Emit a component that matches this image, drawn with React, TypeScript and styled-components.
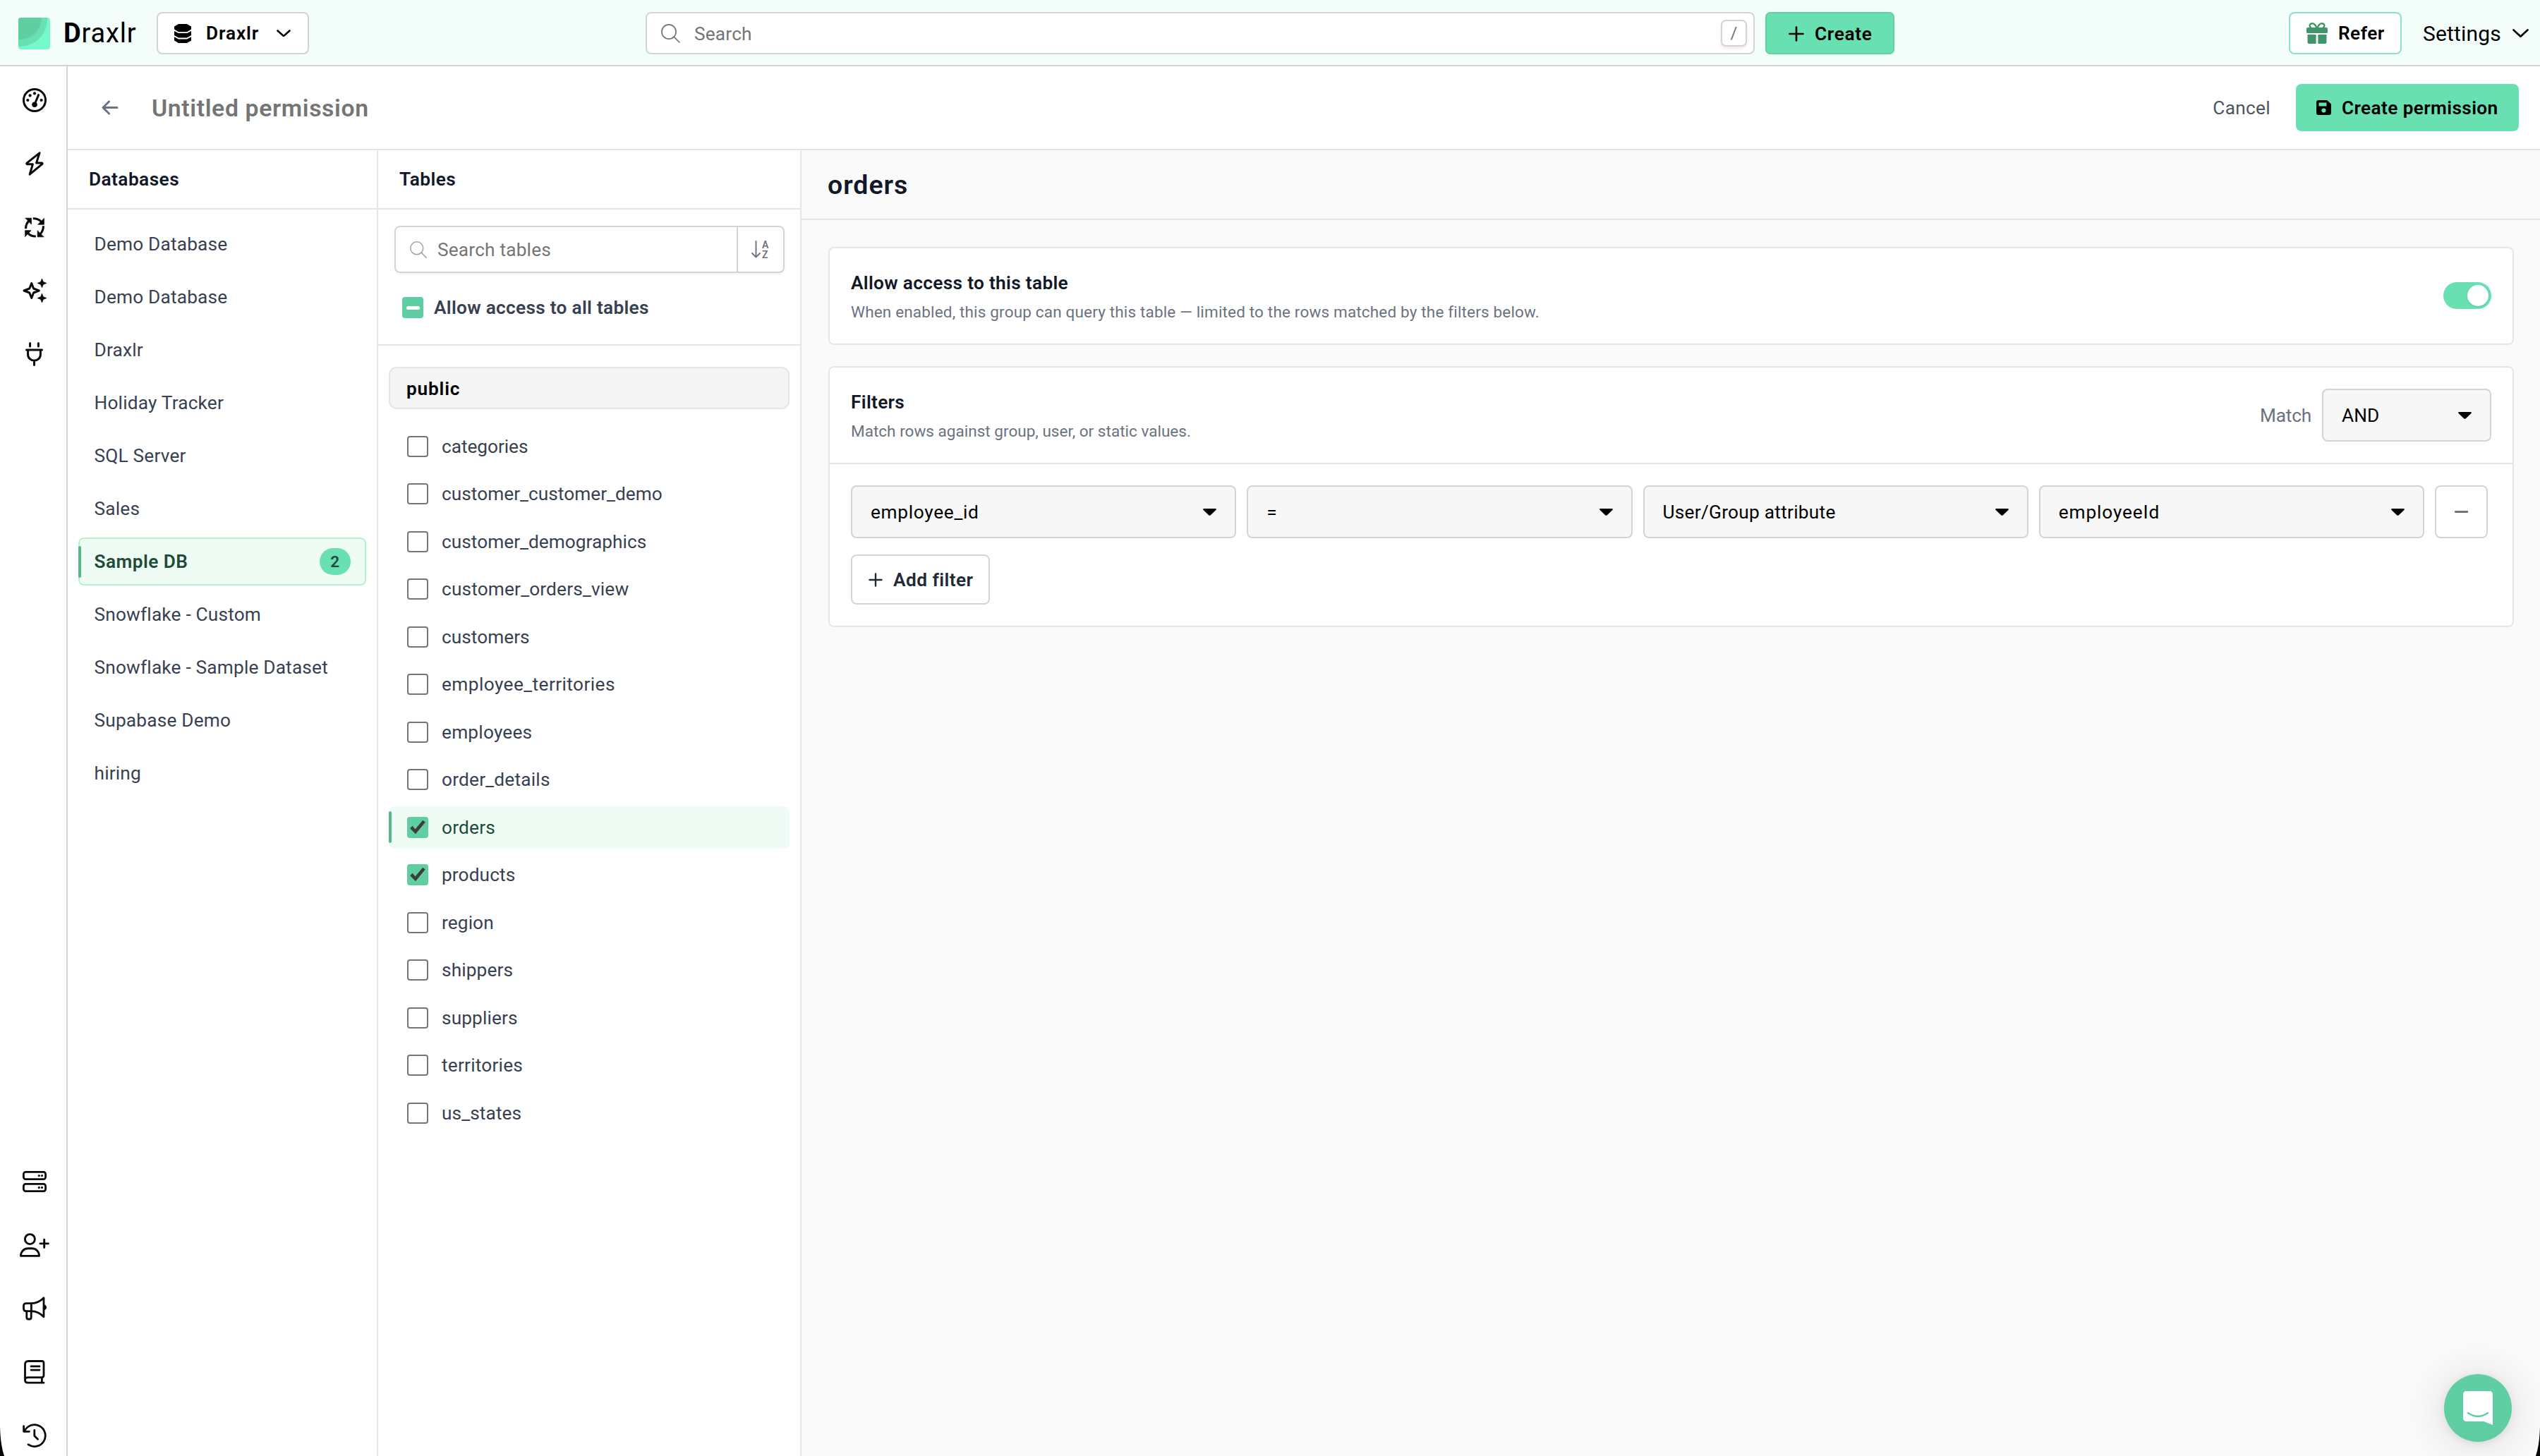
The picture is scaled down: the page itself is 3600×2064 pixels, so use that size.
import React from 'react';
import styled, { createGlobalStyle, css } from 'styled-components';

const c = {
  mint: '#69e0b2',
  mintDeep: '#5fcea3',
  ink: '#111827',
  text: '#374151',
  muted: '#6b7280',
  placeholder: '#757575',
  line: '#e5e5eb',
  frame: '#d4d4d4',
  input: '#d1d5db',
};

const GlobalStyle = createGlobalStyle`
  *, *::before, *::after { box-sizing: border-box; }
  body {
    margin: 0;
    background: #fff;
    font-family: Roboto, "Liberation Sans", sans-serif;
    font-size: 26.25px;
    letter-spacing: 0.007em;
    color: #000;
  }
  svg { display: block; flex: none; }
`;

const Page = styled.div`
  position: relative;
  display: flex;
  flex-direction: column;
  width: 3600px;
  height: 2064px;
  overflow: hidden;
  white-space: nowrap;
`;

/* ---------- top bar ---------- */

const TopBar = styled.header`
  display: flex;
  align-items: center;
  flex: none;
  height: 94px;
  padding: 2px 16px 0 26px;
  background: #f3fdfa;
  border-bottom: 2px solid ${c.frame};
`;

const Brand = styled.div`
  display: flex;
  align-items: center;
  gap: 19px;
  width: 196px;
`;

const Wordmark = styled.span`
  font-size: 38px;
  font-weight: 400;
  letter-spacing: 0.022em;
  b { font-weight: 700; }
`;

const outlined = css`
  display: flex;
  align-items: center;
  background: #fff;
  border: 2px solid ${c.frame};
  border-radius: 8px;
`;

const strong = css`
  font-weight: 600;
  letter-spacing: 0.017em;
`;

const Workspace = styled.div`
  ${outlined}
  ${strong}
  width: 216px;
  height: 60px;
  padding-left: 23px;
  letter-spacing: 0.034em;
  span { width: 121px; padding-left: 21px; }
`;

const GlobalSearch = styled.div`
  ${outlined}
  width: 1572px;
  height: 60px;
  margin-left: 477px;
  padding: 0 9px 0 20px;
  color: ${c.placeholder};
  span { flex: 1; padding: 2px 0 0 20px; }
`;

const Key = styled.kbd`
  display: flex;
  align-items: center;
  justify-content: center;
  width: 37px;
  height: 38px;
  font: 400 24px Roboto, sans-serif;
  border: 2px solid ${c.frame};
  border-radius: 7px;
  box-shadow: 0 3px 4px rgba(0, 0, 0, 0.08);
`;

const CreateButton = styled.button`
  display: flex;
  align-items: center;
  height: 60px;
  width: 183px;
  margin-left: 15px;
  padding: 1px 0 0 31px;
  gap: 15px;
  font: inherit;
  ${strong}
  letter-spacing: 0.025em;
  background: ${c.mint};
  border: 2px solid #63d0a3;
  border-radius: 7px;
`;

const ReferButton = styled.button`
  ${outlined}
  height: 60px;
  width: 160px;
  margin-left: auto;
  padding: 0 0 0 23px;
  gap: 15px;
  font: inherit;
  ${strong}
  border-color: #8ae5bd;
`;

const SettingsMenu = styled.div`
  display: flex;
  align-items: center;
  justify-content: space-between;
  width: 150px;
  margin-left: 30px;
  font-size: 30px;
`;

/* ---------- frame ---------- */

const Body = styled.div`
  display: flex;
  flex: 1;
  min-height: 0;
`;

const Rail = styled.nav`
  display: flex;
  flex-direction: column;
  justify-content: space-between;
  flex: none;
  width: 96px;
  padding-top: 3px;
  border-right: 2px solid ${c.frame};
`;

const RailGroup = styled.div<{ $bleed?: boolean }>`
  margin-bottom: ${p => (p.$bleed ? '-16px' : '0')};
`;

const RailItem = styled.div`
  display: flex;
  align-items: center;
  justify-content: center;
  height: 90px;
  padding-left: 3px;
  color: #0a0a0a;
`;

const Workarea = styled.div`
  display: flex;
  flex-direction: column;
  flex: 1;
  min-width: 0;
`;

const Toolbar = styled.div`
  display: flex;
  align-items: center;
  flex: none;
  height: 119px;
  padding: 0 30px 0 48px;
  border-bottom: 2px solid ${c.line};
`;

const Title = styled.h1`
  flex: 1;
  margin: 0 0 0 47px;
  padding-top: 2px;
  font-size: 33.75px;
  font-weight: 600;
  letter-spacing: 0.019em;
  color: ${c.placeholder};
`;

const Cancel = styled.span`
  margin-right: 36px;
  letter-spacing: 0.011em;
  color: #4b5563;
`;

const SaveButton = styled.button`
  display: flex;
  align-items: center;
  gap: 15px;
  width: 316px;
  height: 67px;
  padding: 0 0 0 29px;
  font: inherit;
  ${strong}
  letter-spacing: 0.014em;
  background: ${c.mint};
  border: 0;
  border-radius: 8px;
`;

const Columns = styled.div`
  display: flex;
  flex: 1;
  min-height: 0;
`;

const Column = styled.section<{ $width: number }>`
  flex: none;
  width: ${p => p.$width}px;
  border-right: 2px solid ${c.line};
`;

const ColumnHead = styled.h2<{ $inset: number }>`
  display: flex;
  align-items: center;
  height: 84px;
  margin: 0;
  padding-left: ${p => p.$inset}px;
  font-size: inherit;
  ${strong}
  color: ${c.ink};
  border-bottom: 2px solid ${c.line};
`;

/* ---------- databases ---------- */

const DatabaseList = styled.div`
  display: flex;
  flex-direction: column;
  gap: 7px;
  padding: 15px 15px 0;
`;

const Marker = styled.i<{ $height: number }>`
  position: absolute;
  left: -2px;
  top: 50%;
  width: 4px;
  height: ${p => p.$height}px;
  margin-top: ${p => -p.$height / 2}px;
  background: #55b98a;
  border-radius: 2px;
`;

const DatabaseItem = styled.div<{ $active: boolean }>`
  position: relative;
  display: flex;
  align-items: center;
  justify-content: space-between;
  height: 68px;
  padding: 0 20px 0 20.5px;
  color: ${c.text};
  border: 2px solid transparent;
  border-radius: 8px;
  ${p => p.$active && css`
    ${strong}
    color: #1f4b39;
    background: #effcf6;
    border-color: #b6f2d0;
  `}
`;

const Badge = styled.span`
  display: flex;
  align-items: center;
  justify-content: center;
  width: 44px;
  height: 38px;
  font-size: 22.5px;
  color: #1f4b39;
  background: ${c.mint};
  border-radius: 19px;
`;

/* ---------- tables ---------- */

const TableTools = styled.div`
  height: 193px;
  padding: 23px 22px 0 23px;
  border-bottom: 2px solid ${c.line};
`;

const TableSearch = styled.div`
  ${outlined}
  height: 67px;
  padding-left: 20px;
  color: ${c.placeholder};
  border-color: ${c.input};
  box-shadow: 0 2px 3px rgba(0, 0, 0, 0.05);
  > span { flex: 1; padding: 1px 0 0 15px; }
`;

const SortToggle = styled.div`
  display: flex;
  align-items: center;
  gap: 2px;
  width: 66px;
  height: 100%;
  padding-left: 19px;
  color: ${c.muted};
  border-left: 2px solid ${c.input};
`;

const SortLetters = styled.div`
  display: flex;
  flex-direction: column;
  font-size: 14px;
  font-weight: 600;
  line-height: 14px;
`;

const AllTables = styled.div`
  display: flex;
  align-items: center;
  gap: 15px;
  height: 30px;
  margin: 34px 0 0 11px;
  ${strong}
  letter-spacing: 0.011em;
  color: ${c.text};
`;

const Box = styled.span<{ $on?: boolean }>`
  display: flex;
  align-items: center;
  justify-content: center;
  flex: none;
  width: 30px;
  height: 30px;
  border: ${p => (p.$on ? '0' : '2px solid #767676')};
  border-radius: 4px;
  background: ${p => (p.$on ? c.mintDeep : '#fff')};
`;

const Dash = styled.i`
  width: 19px;
  height: 5px;
  background: #fff;
  border-radius: 2.5px;
`;

const TableList = styled.div`
  display: flex;
  flex-direction: column;
  gap: 7.5px;
  padding: 30px 15px 0;
`;

const Schema = styled.div`
  display: flex;
  align-items: center;
  height: 60px;
  margin-bottom: 15px;
  padding: 1px 0 0 23px;
  ${strong}
  letter-spacing: 0.03em;
  background: #f4f4f4;
  border: 2px solid #e5e5e5;
  border-radius: 11px;
`;

const TableRow = styled.div<{ $active: boolean; $track: number }>`
  position: relative;
  display: flex;
  align-items: center;
  gap: 19px;
  height: 60px;
  padding-left: 26px;
  letter-spacing: ${p => p.$track}em;
  color: ${p => (p.$active ? '#1f4b39' : c.text)};
  background: ${p => (p.$active ? '#effcf6' : 'transparent')};
  border-radius: 8px;
  ${Marker} { left: 0; }
`;

/* ---------- detail ---------- */

const Detail = styled.main`
  flex: 1;
  min-width: 0;
  background: #fafafa;
`;

const DetailHead = styled.h2`
  display: flex;
  align-items: center;
  height: 99px;
  margin: 0;
  padding-left: 37px;
  font-size: 37.5px;
  font-weight: 600;
  letter-spacing: 0.026em;
  color: ${c.ink};
  border-bottom: 2px solid ${c.line};
`;

const Cards = styled.div`
  display: flex;
  flex-direction: column;
  gap: 30px;
  padding: 38px 37px 0 38px;
`;

const Card = styled.section`
  background: #fff;
  border: 2px solid ${c.line};
  border-radius: 8px;
`;

const CardHead = styled.div<{ $divided?: boolean }>`
  display: flex;
  align-items: center;
  justify-content: space-between;
  height: ${p => (p.$divided ? 137 : 135)}px;
  padding: 0 30px;
  border-bottom: ${p => (p.$divided ? `2px solid ${c.line}` : '0')};
`;

const Copy = styled.div`
  display: flex;
  flex-direction: column;
  gap: 6.5px;
  padding-top: 1px;
`;

const CardTitle = styled.h3`
  margin: 0;
  font-size: inherit;
  line-height: 37.5px;
  font-weight: 600;
  letter-spacing: 0.012em;
  color: ${c.ink};
`;

const Hint = styled.p<{ $track: number }>`
  margin: 0;
  font-size: 22.5px;
  line-height: 30px;
  letter-spacing: ${p => p.$track}em;
  color: ${c.muted};
`;

const Switch = styled.span`
  display: flex;
  justify-content: flex-end;
  width: 68px;
  height: 38px;
  margin-bottom: 1px;
  padding: 4px;
  background: ${c.mint};
  border-radius: 19px;
  i {
    width: 30px;
    height: 30px;
    background: #fff;
    border-radius: 50%;
    box-shadow: 0 1px 3px rgba(0, 0, 0, 0.12);
  }
`;

const MatchGroup = styled.div`
  display: flex;
  align-items: center;
  gap: 15px;
  letter-spacing: -0.008em;
  color: ${c.muted};
`;

const Select = styled.div<{ $width?: number; $track?: number }>`
  display: flex;
  align-items: center;
  justify-content: space-between;
  width: ${p => (p.$width ? `${p.$width}px` : 'auto')};
  height: 75px;
  padding: 1px 26px 0;
  letter-spacing: ${p => p.$track ?? 0.003}em;
  color: #000;
  background: #f7f7f7;
  border: 2px solid ${c.frame};
  border-radius: 8px;
`;

const FilterBody = styled.div`
  padding: 30px 35px 30px 30px;
`;

const FilterRow = styled.div`
  display: grid;
  grid-template-columns: repeat(4, 1fr) 75px;
  gap: 15px;
`;

const RemoveButton = styled.button`
  display: flex;
  align-items: center;
  justify-content: center;
  height: 75px;
  padding: 0;
  background: #fff;
  border: 2px solid ${c.input};
  border-radius: 8px;
  i {
    width: 19px;
    height: 3px;
    background: ${c.muted};
    border-radius: 1px;
  }
`;

const AddButton = styled.button`
  ${outlined}
  gap: 15px;
  width: 197px;
  height: 71px;
  margin-top: 23px;
  padding: 0 0 0 23px;
  font: inherit;
  ${strong}
  color: #1f2937;
  border-color: ${c.input};
`;

/* ---------- overlays ---------- */

const Messenger = styled.div`
  position: absolute;
  right: 40px;
  bottom: 20px;
  display: flex;
  align-items: center;
  justify-content: center;
  width: 96px;
  height: 96px;
  background: ${c.mintDeep};
  border-radius: 50%;
  box-shadow: 0 2px 12px rgba(0, 0, 0, 0.08), 0 4px 64px rgba(0, 0, 0, 0.14);
`;

const WindowCorner = styled.svg<{ $right?: boolean }>`
  position: absolute;
  bottom: 0;
  ${p => (p.$right ? 'right: 0; transform: scaleX(-1);' : 'left: 0;')}
`;

/* ---------- icons ---------- */

type IconProps = { w: number; h: number; sw?: number; children: React.ReactNode };
const Icon = ({ w, h, sw = 3, children }: IconProps) => (
  <svg width={w} height={h} viewBox={`0 0 ${w} ${h}`} fill="none" stroke="currentColor"
    strokeWidth={sw} strokeLinecap="round" strokeLinejoin="round">{children}</svg>
);

const Logo = () => (
  <svg width="45" height="45" viewBox="0 0 45 45">
    <defs><clipPath id="logo"><rect width="45" height="45" rx="4" /></clipPath></defs>
    <g clipPath="url(#logo)">
      <rect width="45" height="45" fill="#75f9c9" />
      <path d="M0 0H41C41 24 25 41 0 41Z" fill="#69e0b2" />
      <path d="M0 0H32.5C32.5 19 19 31 0 31Z" fill="#5fcea3" />
    </g>
  </svg>
);

const DatabaseIcon = () => (
  <svg width="24" height="27" viewBox="0 0 24 27" fill="#000">
    <path d="M6 0H18L24 3.6V7.6L18 11.2H6L0 7.6V3.6Z" />
    <path d="M0 10L6 13H18L24 10V16L18 19.5H6L0 16Z" />
    <path d="M0 18.2L6 21.4H18L24 18.2V23.4L18 27H6L0 23.4Z" />
  </svg>
);

const Chevron = ({ w }: { w: number }) => (
  <Icon w={w} h={w * 0.54} sw={2.6}><path d={`M1.5 1.5L${w / 2} ${w * 0.54 - 1.7}L${w - 1.5} 1.5`} /></Icon>
);

const Magnifier = ({ size, color }: { size: number; color?: string }) => (
  <svg width={size} height={size} viewBox="0 0 27 27" fill="none" stroke={color ?? 'currentColor'} strokeWidth="1.7" strokeLinecap="round">
    <circle cx="11" cy="11" r="10.1" /><path d="M18.3 18.3L26 26" />
  </svg>
);

const Plus = ({ size, sw }: { size: number; sw: number }) => (
  <Icon w={size} h={size} sw={sw}><path d={`M${size / 2} 1.5V${size - 1.5}M1.5 ${size / 2}H${size - 1.5}`} /></Icon>
);

const Caret = () => (
  <svg width="19" height="10" viewBox="0 0 19 10"><path d="M1.6 0H17.4C18.9 0 19.3 1.2 18.4 2L10.8 9.3Q9.5 10.4 8.2 9.3L.6 2C-.3 1.2.1 0 1.6 0Z" /></svg>
);

const Gift = () => (
  <svg width="30" height="30" viewBox="0 0 30 30" fill="#41956b">
    <path d="M14.6 8C13 3 10.5 1.3 8 1.3 5.3 1.3 4.2 3.3 4.8 5.2 5.1 6.5 6 7.4 7 8M15.4 8C17 3 19.5 1.3 22 1.3 24.7 1.3 25.8 3.3 25.2 5.2 24.9 6.5 24 7.4 23 8" fill="none" stroke="#41956b" strokeWidth="2.4" />
    <rect y="7" width="30" height="8" rx="1.5" />
    <path d="M1.5 17H13.6V30H3.5Q1.5 30 1.5 28ZM16.4 17H28.5V28Q28.5 30 26.5 30H16.4Z" />
  </svg>
);

const Floppy = () => (
  <svg width="21" height="21" viewBox="0 0 21 21">
    <path fillRule="evenodd" d="M3 0H15L21 5.5V18Q21 21 18 21H3Q0 21 0 18V3Q0 0 3 0ZM3.5 3.5V8.5H14.5V3.5ZM10.5 11.4A3.1 3.1 0 1 0 10.5 17.6 3.1 3.1 0 1 0 10.5 11.4Z" />
  </svg>
);

const Tick = () => (
  <svg width="30" height="30" viewBox="0 0 30 30"><path d="M4.2 16.2L7.6 12.8 11.5 17.6 22.2 4.8 25.8 7.4 12 24.3Z" fill="#3d3d3d" /></svg>
);

const Gauge = () => (
  <Icon w={34} h={34}>
    <circle cx="17" cy="17" r="15.5" />
    <path d="M17.4 22L22.6 9.6" />
    <g fill="currentColor" stroke="none">
      <circle cx="17" cy="23.2" r="3.8" /><circle cx="7.3" cy="17" r="2.1" /><circle cx="10.6" cy="10.4" r="2.1" />
      <circle cx="17" cy="7.4" r="2.1" /><circle cx="26.6" cy="17" r="2.1" />
    </g>
  </Icon>
);
const Bolt = () => <Icon w={26} h={34} sw={3}><path d="M20 1.8L1.8 16.4Q1.6 17.6 2.6 17.8H10.4L6.2 32.2L24 17.4Q24.4 16.2 23.2 16H15.6Z" /></Icon>;
const Cycle = () => (
  <Icon w={28} h={29} sw={3.1}>
    <g strokeLinecap="butt">
      <path d="M1.6 16.3C1.4 12 2.6 8.6 6 5.2M11.8 1.7C16.4 1.5 20 2.8 23.5 6.3M26.4 12.2C26.6 17 25.4 20.2 22 23.7M15.8 27C11.4 27.2 8 26 4.6 22.6" />
    </g>
    <g fill="currentColor" strokeWidth="0.8">
      <path d="M1.2 1.2H9.4V9.6ZM27.4 1.8V10.2H19ZM18.2 19.2V27.8H26.8ZM.6 18.8H9L.6 27.4Z" />
    </g>
  </Icon>
);
const Sparkles = () => (
  <Icon w={34} h={34} sw={3}>
    <path d="M12.7 6.6L15.6 14 23.3 17 15.6 20 12.7 27.4 9.8 20 2 17 9.8 14Z" />
    <path d="M27.5 0L29.4 4.5 34 6.4 29.4 8.3 27.5 12.8 25.6 8.3 21 6.4 25.6 4.5ZM27.5 21.2L29.4 25.7 34 27.6 29.4 29.5 27.5 34 25.6 29.5 21 27.6 25.6 25.7Z" fill="currentColor" strokeWidth="0.6" />
  </Icon>
);
const Plug = () => <Icon w={25} h={34} sw={3}><path d="M6.6 1.6V6M18.4 1.6V6M1.5 11H23.5M3.6 11V17.5C3.6 22.5 7.5 26 12.5 26S21.4 22.5 21.4 17.5V11M12.5 26V32.4" /></Icon>;
const Servers = () => (
  <Icon w={34} h={30} sw={2.8}>
    <rect x="1.4" y="1.4" width="31.2" height="10.2" rx="3" /><rect x="1.4" y="18.4" width="31.2" height="10.2" rx="3" />
    <g fill="currentColor" stroke="none"><circle cx="23.3" cy="6.6" r="1.6" /><circle cx="27.5" cy="6.6" r="1.6" /><circle cx="23.3" cy="23.4" r="1.6" /><circle cx="27.5" cy="23.4" r="1.6" /></g>
  </Icon>
);
const UserPlus = () => <Icon w={42} h={34} sw={2.9}><circle cx="14.4" cy="8.6" r="7" /><path d="M1.5 32.4C1.5 26 6 21.8 12 21.8H17C23 21.8 27.5 26 27.5 32.4ZM34.7 9.2V20.6M29 14.9H40.4" /></Icon>;
const Megaphone = () => (
  <Icon w={34} h={34} sw={2.8}>
    <path d="M12.4 9.6H5Q1.5 9.6 1.5 13V17Q1.5 20.6 5 20.6H12.4ZM12.4 9.6C20 9.6 25 7 30 1.8V28.8C25 23.4 20 20.6 12.4 20.6M5.8 20.8V29.5Q5.8 32 8.2 32H9.8Q12.2 32 12.2 29.5V20.8" />
    <path d="M31 11.5Q34 12.5 34 15.3T31 19.2Z" fill="currentColor" stroke="none" />
  </Icon>
);
const Book = () => <Icon w={30} h={34} sw={2.8}><path d="M5.6 24.6H24.6Q28 24.6 28 21.8V4Q28 1.5 25.4 1.5H6Q1.5 1.5 1.5 6V28.3Q1.5 32.2 5.4 32.2H28M5.6 24.6Q1.5 24.6 1.5 28.4M25.4 24.8V32M10 8.9H22M10 14.1H22" /></Icon>;
const History = () => <Icon w={34} h={34} sw={2.8}><path d="M8 29.7A15.4 15.4 0 1 0 2.8 10.8M1.6 3.6V11.3H9.4M16.8 9.4V17.4L21.6 22.2" /></Icon>;

/* ---------- data ---------- */

const topNav = [Gauge, Bolt, Cycle, Sparkles, Plug];
const bottomNav = [Servers, UserPlus, Megaphone, Book, History];
const databases: { name: string; count?: number }[] = [
  { name: 'Demo Database' }, { name: 'Demo Database' }, { name: 'Draxlr' }, { name: 'Holiday Tracker' },
  { name: 'SQL Server' }, { name: 'Sales' }, { name: 'Sample DB', count: 2 }, { name: 'Snowflake - Custom' },
  { name: 'Snowflake - Sample Dataset' }, { name: 'Supabase Demo' }, { name: 'hiring' },
];
const tables: { name: string; track?: number }[] = [
  { name: 'categories', track: -0.002 }, { name: 'customer_customer_demo', track: 0.001 },
  { name: 'customer_demographics', track: 0.001 }, { name: 'customer_orders_view', track: 0.006 },
  { name: 'customers', track: 0.001 }, { name: 'employee_territories', track: 0.016 }, { name: 'employees', track: 0.008 },
  { name: 'order_details', track: 0.008 }, { name: 'orders', track: 0.008 }, { name: 'products' }, { name: 'region' },
  { name: 'shippers' }, { name: 'suppliers' }, { name: 'territories', track: 0.008 }, { name: 'us_states' },
];
const allowed = new Set(['orders', 'products']);
const filter = [
  { value: 'employee_id', track: 0.026 }, { value: '=', track: 0 },
  { value: 'User/Group attribute', track: 0.01 }, { value: 'employeeId', track: 0.033 },
];

export default function App() {
  return (
    <Page>
      <GlobalStyle />
      <TopBar>
        <Brand><Logo /><Wordmark><b>D</b>raxlr</Wordmark></Brand>
        <Workspace><DatabaseIcon /><span>Draxlr</span><Chevron w={20} /></Workspace>
        <GlobalSearch><Magnifier size={27} /><span>Search</span><Key>/</Key></GlobalSearch>
        <CreateButton><Plus size={22} sw={2.6} />Create</CreateButton>
        <ReferButton><Gift />Refer</ReferButton>
        <SettingsMenu>Settings<Chevron w={23} /></SettingsMenu>
      </TopBar>
      <Body>
        <Rail>
          <RailGroup>{topNav.map((Glyph, i) => <RailItem key={i}><Glyph /></RailItem>)}</RailGroup>
          <RailGroup $bleed>{bottomNav.map((Glyph, i) => <RailItem key={i}><Glyph /></RailItem>)}</RailGroup>
        </Rail>
        <Workarea>
          <Toolbar>
            <Icon w={24} h={21} sw={3}><g stroke={c.muted}><path d="M22 10.5H2.2M10.5 2L2 10.5L10.5 19" /></g></Icon>
            <Title>Untitled permission</Title>
            <Cancel>Cancel</Cancel>
            <SaveButton><Floppy />Create permission</SaveButton>
          </Toolbar>
          <Columns>
            <Column $width={440}>
              <ColumnHead $inset={30}>Databases</ColumnHead>
              <DatabaseList>
                {databases.map((db, i) => (
                  <DatabaseItem key={i} $active={db.count !== undefined}>
                    {db.name}
                    {db.count !== undefined && <><Badge>{db.count}</Badge><Marker $height={45} /></>}
                  </DatabaseItem>
                ))}
              </DatabaseList>
            </Column>
            <Column $width={600}>
              <ColumnHead $inset={30}>Tables</ColumnHead>
              <TableTools>
                <TableSearch>
                  <Magnifier size={24} color="#9ca3af" />
                  <span>Search tables</span>
                  <SortToggle>
                    <Icon w={13} h={25} sw={1.9}><path d="M6.5 1V23.5M1 18L6.5 23.6L12 18" /></Icon>
                    <SortLetters><span>A</span><span>Z</span></SortLetters>
                  </SortToggle>
                </TableSearch>
                <AllTables><Box $on><Dash /></Box>Allow access to all tables</AllTables>
              </TableTools>
              <TableList>
                <Schema>public</Schema>
                {tables.map(({ name, track }) => (
                  <TableRow key={name} $active={name === 'orders'} $track={track ?? 0.004}>
                    {name === 'orders' && <Marker $height={45} />}
                    <Box $on={allowed.has(name)}>{allowed.has(name) && <Tick />}</Box>
                    {name}
                  </TableRow>
                ))}
              </TableList>
            </Column>
            <Detail>
              <DetailHead>orders</DetailHead>
              <Cards>
                <Card>
                  <CardHead>
                    <Copy>
                      <CardTitle>Allow access to this table</CardTitle>
                      <Hint $track={0.0076}>When enabled, this group can query this table — limited to the rows matched by the filters below.</Hint>
                    </Copy>
                    <Switch><i /></Switch>
                  </CardHead>
                </Card>
                <Card>
                  <CardHead $divided>
                    <Copy>
                      <CardTitle>Filters</CardTitle>
                      <Hint $track={0.001}>Match rows against group, user, or static values.</Hint>
                    </Copy>
                    <MatchGroup>Match<Select $width={240}>AND<Caret /></Select></MatchGroup>
                  </CardHead>
                  <FilterBody>
                    <FilterRow>
                      {filter.map(f => <Select key={f.value} $track={f.track}>{f.value}<Caret /></Select>)}
                      <RemoveButton><i /></RemoveButton>
                    </FilterRow>
                    <AddButton><Plus size={20} sw={2.4} />Add filter</AddButton>
                  </FilterBody>
                </Card>
              </Cards>
            </Detail>
          </Columns>
        </Workarea>
      </Body>
      <Messenger>
        <svg width="42" height="48" viewBox="0 0 42 48">
          <path d="M5 0H37Q42 0 42 5V48L29.5 43H5Q0 43 0 38V5Q0 0 5 0Z" fill="#fff" />
          <path d="M7 31Q21 40.5 35 31" fill="none" stroke={c.mintDeep} strokeWidth="2.6" strokeLinecap="round" />
        </svg>
      </Messenger>
      <WindowCorner width="8" height="44" viewBox="0 0 8 44"><path d="M0 2C.4 18 2 32 6 44H0Z" /></WindowCorner>
      <WindowCorner $right width="8" height="44" viewBox="0 0 8 44"><path d="M0 2C.4 18 2 32 6 44H0Z" /></WindowCorner>
    </Page>
  );
}
